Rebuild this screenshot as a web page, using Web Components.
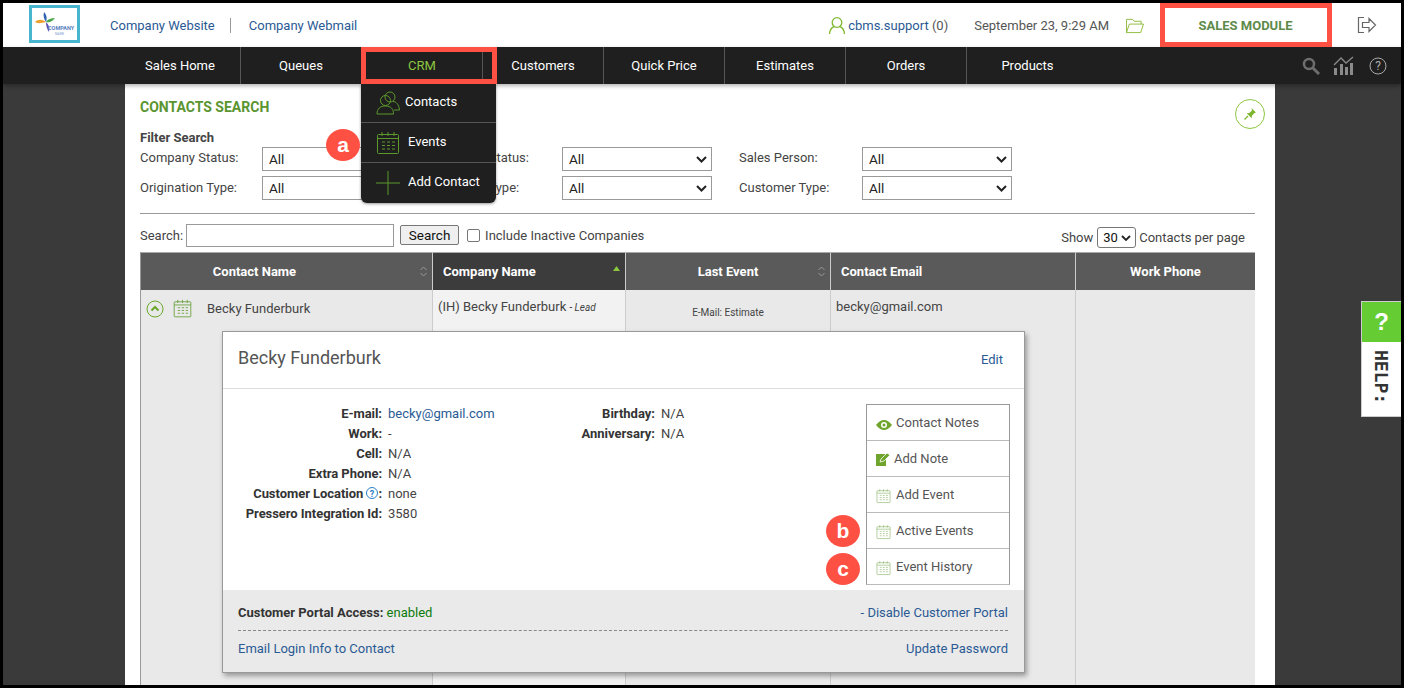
<!doctype html>
<html>
<head>
<meta charset="utf-8">
<style>
  html, body { margin: 0; height: 100%; overflow: hidden; background: #000; }
  body { font: 13px Roboto, "Liberation Sans", sans-serif; color: #444; }
  app-shell { width: 1404px; height: 688px; }
</style>
</head>
<body>
<app-shell></app-shell>
<script>
(function() {
  const GREEN = '#5c9a2c';
  const calIcon = (w, h, c, sw) =>
    `<svg width="${w}" height="${h}" viewBox="0 0 24 24" fill="none" stroke="${c}" stroke-width="${sw || 1}">
      <rect x="1.5" y="3.5" width="21" height="19" rx="1"/>
      <path d="M1.5 7.5h21M6 1v4M12 1v4M18 1v4"/>
      <path d="M6 11h3M11 11h3M16 11h3M6 14.5h3M11 14.5h3M16 14.5h3M6 18h3M11 18h3M16 18h3"/>
    </svg>`;
  const arrow = `<svg width="11" height="7" viewBox="0 0 11 7" fill="none" stroke="#222" stroke-width="2"><path d="M1 1l4.500 4.500L10 1"/></svg>`;
  const sortIcon = `<svg width="7" height="11" viewBox="0 0 7 11" fill="none" stroke="#999" stroke-width="1"><path d="M.5 4l3-3 3 3M.5 7l3 3 3-3"/></svg>`;

  function define(name, css, html) {
    customElements.define(name, class extends HTMLElement {
      constructor() {
        super();
        this.attachShadow({mode: 'open'}).innerHTML = `<style>${css}</style>${html}`;
      }
    });
  }

  define('app-header', `
    :host { display: flex; align-items: center; height: 44px; background: #fff; font-size: 13px; color: #555; position: relative; }
    a { color: #2a5a94; text-decoration: none; }
    .logo { margin-left: 26px; width: 45px; height: 32px; border: 3px solid #48b5cf; background: #fff; margin-top: -2px; }
    .logo svg { display: block; }
    .links { display: flex; align-items: center; margin-left: 30px; }
    .links i { width: 1px; height: 15px; background: #999; margin: 0 18px 0 15px; }
    .right { margin-left: auto; display: flex; align-items: center; }
    .user { display: flex; align-items: center; gap: 2px; }
    .date { margin-left: 26px; }
    .folder { margin-left: 16px; display: block; }
    .module { margin-left: 20px; width: 165px; height: 44px; box-sizing: border-box; padding-right: 4px; display: flex; align-items: center; justify-content: center; font-weight: 700; font-size: 13px; color: #5d8a4a; }
    .logout { margin: 0 24px 0 27px; display: block; }
  `, `
    <div class="logo">
      <svg width="45" height="32" viewBox="0 0 45 32">
        <path d="M3 14c3-3 7-3 11 0-4 1-8 2-11 0z" fill="#f0a030"/>
        <path d="M14 14c3 1 6 0 9-4-4 0-7 1-9 4z" fill="#4aa84a"/>
        <path d="M12 4c3 3 3 7 2 10-2-3-3-6-2-10z" fill="#3060b0"/>
        <path d="M14 14c0 4 1 7 3 10 1-4 0-7-3-10z" fill="#5a50b8"/>
        <text x="16" y="22" font-size="5.500" fill="#5a7fc0" font-family="Roboto" font-weight="700">COMPANY</text>
        <text x="23" y="27" font-size="3.200" fill="#7a9ad0" font-family="Roboto">NAME</text>
      </svg>
    </div>
    <div class="links"><a>Company Website</a><i></i><a>Company Webmail</a></div>
    <div class="right">
      <div class="user">
        <svg width="18" height="19" viewBox="0 0 18 19" fill="none" stroke="#7fb82e" stroke-width="1.3"><circle cx="9" cy="6.5" r="4.8"/><path d="M1.500 18c.5-4.500 3-7 5-7.500M16.500 18c-.5-4.500-3-7-5-7.500"/></svg>
        <span><a>cbms.support</a> (0)</span>
      </div>
      <span class="date">September 23, 9:29 AM</span>
      <svg class="folder" width="20" height="17" viewBox="0 0 20 18" fill="none" stroke="#8dbb3c" stroke-width="1"><path d="M1 16.500V2.500h6.500l1.500 2h7.500v3M1 16.500l3-9h15l-3 9z"/></svg>
      <div class="module">SALES MODULE</div>
      <svg class="logout" width="20" height="18" viewBox="0 0 20 18" fill="none" stroke="#666" stroke-width="1.200"><path d="M7 1.500H1.500v15H7M5.500 6.500h6.500V2.500l6.500 6.500-6.500 6.500v-4H5.500z"/></svg>
    </div>
  `);

  define('nav-item', `
    :host { display: flex; align-items: center; justify-content: center; height: 37px; color: #fff; font-size: 13px; border-right: 1px solid #555; box-sizing: border-box; }
    :host([active]) { color: #8dc63f; }
    :host([plain]) { border-right: 0; }
  `, `<slot></slot>`);

  define('app-nav', `
    :host { display: flex; align-items: center; height: 37px; background: #1f1f1f; padding-left: 117px; box-shadow: 0 2px 4px rgba(0,0,0,.3); position: relative; z-index: 2; }
    .items { display: flex; }
    .tools { margin-left: auto; display: flex; align-items: center; margin-right: 14px; }
    svg { display: block; }
    .chart { margin: 0 15px 0 13px; }
  `, `
    <div class="items"><slot></slot></div>
    <div class="tools">
      <svg width="18" height="18" viewBox="0 0 18 18" fill="none" stroke="#6e6e6e" stroke-width="2.500"><circle cx="7" cy="7" r="5"/><path d="M11 11l6 6" stroke-width="3"/></svg>
      <svg class="chart" width="21" height="19" viewBox="0 0 21 19"><g fill="#8a8a8a"><rect x="1" y="12" width="3" height="7"/><rect x="7" y="8" width="3" height="11"/><rect x="12" y="11" width="3" height="8"/><rect x="17" y="7" width="3" height="12"/></g><path d="M1 9l7-7 5 5 7-6" fill="none" stroke="#8a8a8a" stroke-width="1.300"/></svg>
      <svg width="18" height="18" viewBox="0 0 18 18"><circle cx="9" cy="9" r="8" fill="none" stroke="#aaa" stroke-width="1"/><text x="9" y="13" text-anchor="middle" font-size="12" fill="#aaa" font-family="Roboto">?</text></svg>
    </div>
  `);

  define('crm-menu', `
    :host { position: absolute; left: 361px; top: 84px; width: 135px; height: 119px; background: #1f1f1f; border-radius: 0 0 6px 6px; color: #fff; z-index: 3; display: grid; grid-template-rows: 39px 40px 40px; box-shadow: 0 1px 3px rgba(0,0,0,.4); }
    .row { display: flex; align-items: center; border-bottom: 1px solid #555; box-sizing: border-box; padding-left: 15px; }
    .row:last-child { border-bottom: 0; }
    .t { margin-left: 8px; margin-top: -2px; }
    .row:last-child .t { margin-top: -4px; }
    .first .t { margin-left: 5px; margin-top: -3px; }
    svg { display: block; }
  `, `
    <div class="row first">
      <svg width="24" height="24" viewBox="0 0 24 24" fill="none" stroke="#5c9a2c" stroke-width="1"><circle cx="14" cy="6" r="5"/><circle cx="9.500" cy="9.500" r="5"/><path d="M1 23c0-5 3-8 8.500-8s8 3 8 8zM17 10.500c3 0 6 3 6.500 8.500H18"/></svg>
      <span class="t">Contacts</span>
    </div>
    <div class="row">${calIcon(24, 24, GREEN)}<span class="t">Events</span></div>
    <div class="row"><svg width="24" height="24" viewBox="0 0 24 24" stroke="#5c9a2c" stroke-width="1"><path d="M0 12h24M12 0v24"/></svg><span class="t">Add Contact</span></div>
  `);

  define('red-box', `
    :host { position: absolute; border: 5px solid #ff5044; box-sizing: border-box; z-index: 5; }
  `, ``);

  define('mark-badge', `
    :host { position: absolute; width: 34px; height: 32px; border-radius: 50%; background: #ff5044; color: #fff; font: 700 21px "Liberation Sans", sans-serif; display: flex; align-items: center; justify-content: center; z-index: 6; }
  `, `<slot></slot>`);

  define('filter-search', `
    :host { display: block; }
    .title { font-weight: 700; color: #444; line-height: 15px; }
    .grid { display: grid; grid-template-columns: 122px 150px 150px 150px 27px 123px 150px; grid-auto-rows: 24px; row-gap: 5px; margin-top: 2px; }
    label { line-height: 21px; }
    label.b { line-height: 23px; }
    label.mid { grid-column: 3; padding-left: 28px; }
    label.r { grid-column: 6; }
    .sel { box-sizing: border-box; height: 24px; border: 1px solid #999; background: #fff; display: flex; align-items: center; padding-left: 6px; color: #222; position: relative; font-size: 13.500px; }
    .sel svg { position: absolute; right: 4px; top: 8px; }
    .s7 { grid-column: 7; }
  `, `
    <div class="title">Filter Search</div>
    <div class="grid">
      <label>Company Status:</label><div class="sel">All</div>
      <label class="mid">Contact Status:</label><div class="sel">All${arrow}</div>
      <label class="r">Sales Person:</label><div class="sel s7">All${arrow}</div>
      <label class="b">Origination Type:</label><div class="sel">All</div>
      <label class="mid b">Contact Type:</label><div class="sel">All${arrow}</div>
      <label class="r b">Customer Type:</label><div class="sel s7">All${arrow}</div>
    </div>
  `);

  define('search-bar', `
    :host { display: flex; align-items: center; height: 24px; padding-right: 10px; }
    .inp { width: 208px; height: 23px; box-sizing: border-box; border: 1px solid #999; background: #fff; margin-left: 3px; }
    .btn { margin-left: 6px; height: 20px; width: 59px; box-sizing: border-box; border: 1px solid #777; border-radius: 2px; background: #efefef; display: flex; align-items: center; justify-content: center; color: #111; font-size: 13.500px; }
    .chk { margin-left: 8px; width: 13px; height: 13px; box-sizing: border-box; border: 1px solid #777; border-radius: 2px; background: #fff; }
    .lab { margin-left: 5px; }
    .show { margin-left: auto; display: flex; align-items: center; margin-top: 5px; }
    .sel { width: 39px; height: 21px; box-sizing: border-box; border: 1px solid #777; border-radius: 3px; margin: 0 3px 0 4px; display: flex; align-items: center; padding-left: 5px; gap: 3px; color: #111; }
  `, `
    <span>Search:</span><div class="inp"></div><div class="btn">Search</div><div class="chk"></div><span class="lab">Include Inactive Companies</span>
    <div class="show">Show<div class="sel">30<svg width="10" height="6" viewBox="0 0 10 6" fill="none" stroke="#222" stroke-width="1.800"><path d="M1 1l4 4 4-4"/></svg></div>Contacts per page</div>
  `);

  define('contacts-table', `
    :host { display: grid; grid-template-columns: 292px 193px 205px 245px 179px; grid-template-rows: 38px 1fr; margin-top: 5px; box-sizing: border-box; border-left: 1px solid #999; border-right: 1px solid #999; }
    .h { background: #5a5a5a; color: #fff; font-weight: 700; display: flex; align-items: center; justify-content: center; border-right: 1px solid #ccc; border-top: 1px solid #aaa; box-sizing: border-box; position: relative; }
    .h.first { padding-right: 64px; }
    .h.l { justify-content: flex-start; padding-left: 10px; }
    .h.sorted { background: #3c3c3c; }
    .h svg { position: absolute; right: 5px; top: 13px; }
    .h.end { border-right: 0; }
    .c { border-right: 1px solid #ccc; box-sizing: border-box; background: #e9e9e9; display: grid; grid-template-rows: 41px 1fr; }
    .c.last { border-right: 0; }
    .top { padding: 9px 5px 0; }
    .c.sorted .top, .c.sorted .rest { background: #f2f2f2; }
    .name { display: flex; align-items: center; padding: 9px 0 0 5px; height: 19px; }
    .name .tx { margin-left: 15px; }
    .name svg + svg { margin-left: 9px; }
    .lead { font-size: 10px; font-style: italic; }
    .top.ev { font-size: 10px; text-align: center; padding-top: 17px; }
  `, `
    <div class="h first">Contact Name${sortIcon}</div>
    <div class="h l sorted">Company Name<svg width="7" height="5" viewBox="0 0 7 5"><path d="M0 5l3.500-5L7 5z" fill="#8dc63f"/></svg></div>
    <div class="h">Last Event${sortIcon}</div>
    <div class="h l">Contact Email</div>
    <div class="h end">Work Phone</div>
    <div class="c"><div class="name">
      <svg width="18" height="18" viewBox="0 0 18 18" fill="none" stroke="#6aa82a"><circle cx="9" cy="9" r="8"/><path d="M5.500 10.500L9 7l3.500 3.500" stroke-width="2"/></svg>
      ${calIcon(19, 19, GREEN)}<span class="tx">Becky Funderburk</span>
    </div><div></div></div>
    <div class="c sorted"><div class="top">(IH) Becky Funderburk <span class="lead">- Lead</span></div><div class="rest"></div></div>
    <div class="c"><div class="top ev">E-Mail: Estimate</div><div></div></div>
    <div class="c"><div class="top">becky@gmail.com</div><div></div></div>
    <div class="c last"><div></div><div></div></div>
  `);

  define('contact-card', `
    :host { position: absolute; left: 222px; top: 331px; width: 803px; height: 342px; box-sizing: border-box; background: #fff; border: 1px solid #999; box-shadow: 2px 3px 5px rgba(0,0,0,.35); display: flex; flex-direction: column; z-index: 1; }
    a { color: #2a5a94; text-decoration: none; }
    .head { flex: none; height: 57px; box-sizing: border-box; padding: 0 21px 0 15px; display: flex; align-items: center; justify-content: space-between; border-bottom: 1px solid #ddd; }
    .head a { margin-top: -2px; }
    h2 { margin: -5px 0 0; font-size: 18px; font-weight: 400; color: #555; }
    .body { flex: 1; min-height: 0; display: flex; padding: 15px 14px 0 0; }
    .info { display: grid; grid-template-columns: 159px auto; grid-auto-rows: 20px; column-gap: 6px; align-content: start; line-height: 20px; width: 332px; }
    .info2 { display: grid; grid-template-columns: 100px auto; grid-auto-rows: 20px; column-gap: 6px; align-content: start; line-height: 20px; }
    b { text-align: right; color: #333; white-space: nowrap; }
    .info b { letter-spacing: -.05px; }
    .q { display: inline-block; width: 12px; height: 12px; vertical-align: -1px; }
    .actions { margin-left: auto; width: 144px; height: 181px; box-sizing: border-box; border: 1px solid #999; border-bottom-color: #bbb; display: grid; grid-template-rows: repeat(5, 36px); }
    .act { display: flex; align-items: center; padding-left: 9px; gap: 5px; border-bottom: 1px solid #bbb; color: #555; box-sizing: border-box; }
    .act:last-child { border-bottom: 0; padding-bottom: 1px; }
    .act svg { margin-top: 2px; }
    .foot { flex: none; height: 82px; box-sizing: border-box; background: #eaeaea; padding: 0 16px 0 15px; display: grid; grid-template-rows: 41px 35px; }
    .line { display: flex; justify-content: space-between; align-items: center; }
    .line.a { border-bottom: 1px dashed #888; padding-top: 5px; }
    .en { color: #0a7a0a; }
    svg { display: block; flex: none; }
  `, `
    <div class="head"><h2>Becky Funderburk</h2><a>Edit</a></div>
    <div class="body">
      <div class="info">
        <b>E-mail:</b><a>becky@gmail.com</a>
        <b>Work:</b><span>-</span>
        <b>Cell:</b><span>N/A</span>
        <b>Extra Phone:</b><span>N/A</span>
        <b>Customer Location <svg class="q" style="display:inline-block" viewBox="0 0 12 12"><circle cx="6" cy="6" r="5.500" fill="none" stroke="#2a7fc8"/><text x="6" y="9.500" text-anchor="middle" font-size="9" font-weight="700" fill="#2a7fc8" font-family="Roboto">?</text></svg>:</b><span>none</span>
        <b>Pressero Integration Id:</b><span>3580</span>
      </div>
      <div class="info2">
        <b>Birthday:</b><span>N/A</span>
        <b>Anniversary:</b><span>N/A</span>
      </div>
      <div class="actions">
        <div class="act" style="gap:4px"><svg width="16" height="12" viewBox="0 0 16 12" style="margin-top:4px"><path d="M0 6c3-4 6-5 8-5s5 1 8 5c-3 4-6 5-8 5s-5-1-8-5z" fill="#6fa52c"/><circle cx="8" cy="6" r="3" fill="#fff"/><circle cx="8" cy="6" r="1.500" fill="#6fa52c"/></svg><span>Contact Notes</span></div>
        <div class="act" style="gap:4px"><svg width="14" height="13" viewBox="0 0 14 13"><path d="M0 1h10v12H0z" fill="#6fa52c"/><path d="M4 9l1-3 6-6 3 2-6 6z" fill="#6fa52c" stroke="#fff" stroke-width=".8"/></svg><span>Add Note</span></div>
        <div class="act">${calIcon(15, 16, '#8db56a')}<span>Add Event</span></div>
        <div class="act">${calIcon(15, 16, '#8db56a')}<span>Active Events</span></div>
        <div class="act">${calIcon(15, 16, '#8db56a')}<span>Event History</span></div>
      </div>
    </div>
    <div class="foot">
      <div class="line a"><span><b>Customer Portal Access:</b> <span class="en">enabled</span></span><span><a>- Disable Customer Portal</a></span></div>
      <div class="line"><a>Email Login Info to Contact</a><a>Update Password</a></div>
    </div>
  `);

  define('help-tab', `
    :host { position: absolute; left: 1361px; top: 301px; width: 40px; height: 116px; box-sizing: border-box; border: 1px solid #ccc; border-right: 0; background: #fff; display: flex; flex-direction: column; z-index: 2; }
    .q { height: 40px; background: #66cc33; color: #fff; font: 700 24px "Liberation Sans", sans-serif; display: flex; align-items: center; justify-content: center; }
    .t { writing-mode: vertical-rl; font: 700 18px "DejaVu Sans Mono", monospace; color: #333; margin: 8px auto 0; }
  `, `<div class="q">?</div><div class="t">HELP:</div>`);

  define('app-shell', `
    :host { display: block; box-sizing: border-box; padding: 3px; position: relative; overflow: hidden; }
    .screen { height: 682px; display: flex; flex-direction: column; overflow: hidden; background: #3a3a3a; }
    main { width: 1150px; flex: 1; margin-left: 122px; background: #fff; box-sizing: border-box; padding: 15px 20px 0 15px; display: flex; flex-direction: column; min-height: 0; }
    h1 { margin: 0 0 15px; font-size: 14px; font-weight: 700; color: #5a9530; line-height: 16px; }
    .pin { position: absolute; left: 1235px; top: 99px; width: 30px; height: 30px; box-sizing: border-box; border: 1px solid #8dc63f; border-radius: 50%; display: flex; align-items: center; justify-content: center; }
    hr { border: 0; border-top: 1px solid #999; margin: 13px 5px 9px 0; width: 1115px; }
    contacts-table { flex: 1; min-height: 0; width: 1115px; }
  `, `
    <div class="screen">
      <app-header></app-header>
      <app-nav>
        <nav-item style="width:121px">Sales Home</nav-item>
        <nav-item style="width:121px">Queues</nav-item>
        <nav-item style="width:121px" active>CRM</nav-item>
        <nav-item style="width:121px">Customers</nav-item>
        <nav-item style="width:121px">Quick Price</nav-item>
        <nav-item style="width:121px">Estimates</nav-item>
        <nav-item style="width:121px">Orders</nav-item>
        <nav-item style="width:121px" plain>Products</nav-item>
      </app-nav>
      <main>
        <h1>CONTACTS SEARCH</h1>
        <filter-search></filter-search>
        <hr>
        <search-bar></search-bar>
        <contacts-table></contacts-table>
      </main>
    </div>
    <div class="pin"><svg width="14" height="14" viewBox="0 0 14 14"><path d="M8.500 1l4.500 4.500-1.500.5-2.500 2.500-.3 2.700-5-5 2.700-.3L9 3.500z" fill="#7db52e"/><path d="M5 9l-3.500 3.500" stroke="#7db52e" stroke-width="1.300"/></svg></div>
    <crm-menu></crm-menu>
    <contact-card></contact-card>
    <help-tab></help-tab>
    <red-box style="left:361px;top:47px;width:136px;height:37px"></red-box>
    <red-box style="left:1160px;top:3px;width:172px;height:44px"></red-box>
    <mark-badge style="left:326px;top:129px">a</mark-badge>
    <mark-badge style="left:826px;top:515px">b</mark-badge>
    <mark-badge style="left:826px;top:553px">c</mark-badge>
  `);
}());
</script>
</body>
</html>
